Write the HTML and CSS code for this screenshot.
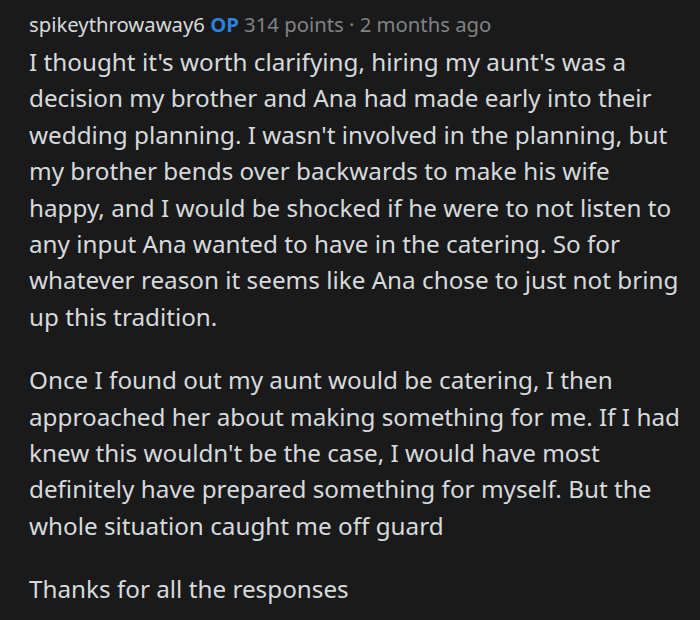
FILE: index.html
```html
<!DOCTYPE html>
<html lang="en">
<head>
<meta charset="utf-8">
<link rel="stylesheet" href="styles.css">
</head>
<body>
<div class="comment">
  <div class="meta">
    <span class="user">spikeythrowaway6</span>
    <span class="op">OP</span>
    <span class="info">314 points · 2 months ago</span>
  </div>
  <div class="body">
    <p>I thought it's worth clarifying, hiring my aunt's was a decision my brother and Ana had made early into their wedding planning. I wasn't involved in the planning, but my brother bends over backwards to make his wife happy, and I would be shocked if he were to not listen to any input Ana wanted to have in the catering. So for whatever reason it seems like Ana chose to just not bring up this tradition.</p>
    <p>Once I found out my aunt would be catering, I then approached her about making something for me. If I had knew this wouldn't be the case, I would have most definitely have prepared something for myself. But the whole situation caught me off guard</p>
    <p>Thanks for all the responses</p>
  </div>
</div>
</body>
</html>
```
FILE: styles.css
```css
html, body {
  margin: 0;
  padding: 0;
  background: #1a1a1b;
}
.comment {
  padding: 12px 11px 0 29px;
  width: 660px;
}
.meta {
  font-family: "Noto Sans", sans-serif;
  font-size: 20.3px;
  line-height: 24px;
  color: #d7dadc;
  white-space: nowrap;
}
.op {
  color: #2f80d8;
  font-weight: 700;
}
.info {
  color: #818384;
}
.body {
  margin-top: 8px;
  font-family: "Noto Sans", sans-serif;
  font-size: 24.25px;
  line-height: 36.4px;
  color: #d7dadc;
}
.body p {
  margin: 0 0 27px 0;
}
```
